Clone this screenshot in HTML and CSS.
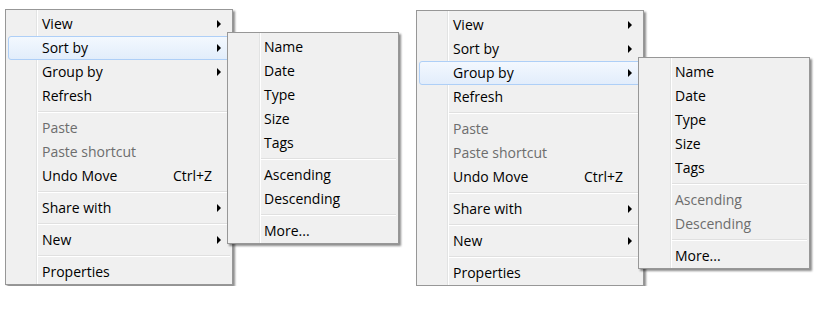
FILE: index.html
```html
<!DOCTYPE html>
<html lang="en">
<head>
  <meta charset="UTF-8">
  <title>Context Menus</title>
  <link rel="stylesheet" href="styles.css">
</head>
<body>
  <div class="desk">
    <!-- Sort by open -->
    <div class="menu-group">
      <ul class="menu">
        <li class="item">View<span class="arrow"></span></li>
        <li class="item hot">Sort by<span class="arrow"></span></li>
        <li class="item">Group by<span class="arrow"></span></li>
        <li class="item">Refresh</li>
        <li class="sep"></li>
        <li class="item off">Paste</li>
        <li class="item off">Paste shortcut</li>
        <li class="item">Undo Move<span class="key">Ctrl+Z</span></li>
        <li class="sep"></li>
        <li class="item">Share with<span class="arrow"></span></li>
        <li class="sep"></li>
        <li class="item">New<span class="arrow"></span></li>
        <li class="sep"></li>
        <li class="item">Properties</li>
      </ul>
      <ul class="menu submenu sub-sort">
        <li class="item">Name</li>
        <li class="item">Date</li>
        <li class="item">Type</li>
        <li class="item">Size</li>
        <li class="item">Tags</li>
        <li class="sep"></li>
        <li class="item">Ascending</li>
        <li class="item">Descending</li>
        <li class="sep"></li>
        <li class="item">More...</li>
      </ul>
    </div>

    <!-- Group by open -->
    <div class="menu-group second">
      <ul class="menu">
        <li class="item">View<span class="arrow"></span></li>
        <li class="item">Sort by<span class="arrow"></span></li>
        <li class="item hot">Group by<span class="arrow"></span></li>
        <li class="item">Refresh</li>
        <li class="sep"></li>
        <li class="item off">Paste</li>
        <li class="item off">Paste shortcut</li>
        <li class="item">Undo Move<span class="key">Ctrl+Z</span></li>
        <li class="sep"></li>
        <li class="item">Share with<span class="arrow"></span></li>
        <li class="sep"></li>
        <li class="item">New<span class="arrow"></span></li>
        <li class="sep"></li>
        <li class="item">Properties</li>
      </ul>
      <ul class="menu submenu sub-group">
        <li class="item">Name</li>
        <li class="item">Date</li>
        <li class="item">Type</li>
        <li class="item">Size</li>
        <li class="item">Tags</li>
        <li class="sep"></li>
        <li class="item off">Ascending</li>
        <li class="item off">Descending</li>
        <li class="sep"></li>
        <li class="item">More...</li>
      </ul>
    </div>
  </div>
</body>
</html>
```

FILE: styles.css
```css
body {
  margin: 0;
  background-color: #fff;
  font-family: 'Open Sans', 'Noto Sans', sans-serif;
  font-size: 14px;
  color: #000;
}

.desk {
  display: flex;
  gap: 183px;
  padding: 9px 0 0 5px;
}

.menu-group {
  position: relative; /* anchor for the open submenu */
}

.menu-group.second {
  margin-top: 1px;
}

/* Menu box with the icon gutter line */
.menu {
  list-style: none;
  margin: 0;
  padding: 2px 2px 0 2px;
  width: 222px;
  border: 1px solid #979797;
  background-color: #f0f0f0;
  background-image: linear-gradient(to right,
    transparent 30px, #e2e3e3 30px, #e2e3e3 31px, #fff 31px, #fff 32px, transparent 32px);
  box-shadow: 2px 2px 2px rgba(0, 0, 0, 0.45);
}

.item {
  display: flex;
  align-items: center;
  height: 24px;
  box-sizing: border-box;
  padding-left: 34px;
  line-height: 24px;
  white-space: nowrap;
}

.item.off {
  color: #6d6d6d;
}

.item.hot {
  border: 1px solid #aecff7;
  border-radius: 3px;
  padding-left: 33px;
  background: linear-gradient(to bottom, #f3f8fe, #e2edfb);
}

.sep {
  height: 8px;
  margin-left: 30px;
  background: linear-gradient(to bottom,
    transparent 3px, #e0e0e0 3px, #e0e0e0 4px, #fff 4px, #fff 5px, transparent 5px);
}

.arrow {
  margin-left: auto;
  margin-right: 9px;
  width: 0;
  height: 0;
  border-left: 4px solid #000;
  border-top: 4px solid transparent;
  border-bottom: 4px solid transparent;
}

.hot .arrow {
  margin-right: 8px;
}

.key {
  margin-left: auto;
  margin-right: 18px;
}

/* Open submenus, laid over the parent menu */
.submenu {
  position: absolute;
  left: 222px;
  width: 166px;
  background-image: linear-gradient(to right,
    transparent 31px, #e2e3e3 31px, #e2e3e3 32px, #fff 32px, #fff 33px, transparent 33px);
}

.submenu .item {
  padding-left: 34px;
}

.submenu .sep {
  margin-left: 31px;
}

.sub-sort {
  top: 23px;
}

.sub-group {
  top: 47px;
}
```
